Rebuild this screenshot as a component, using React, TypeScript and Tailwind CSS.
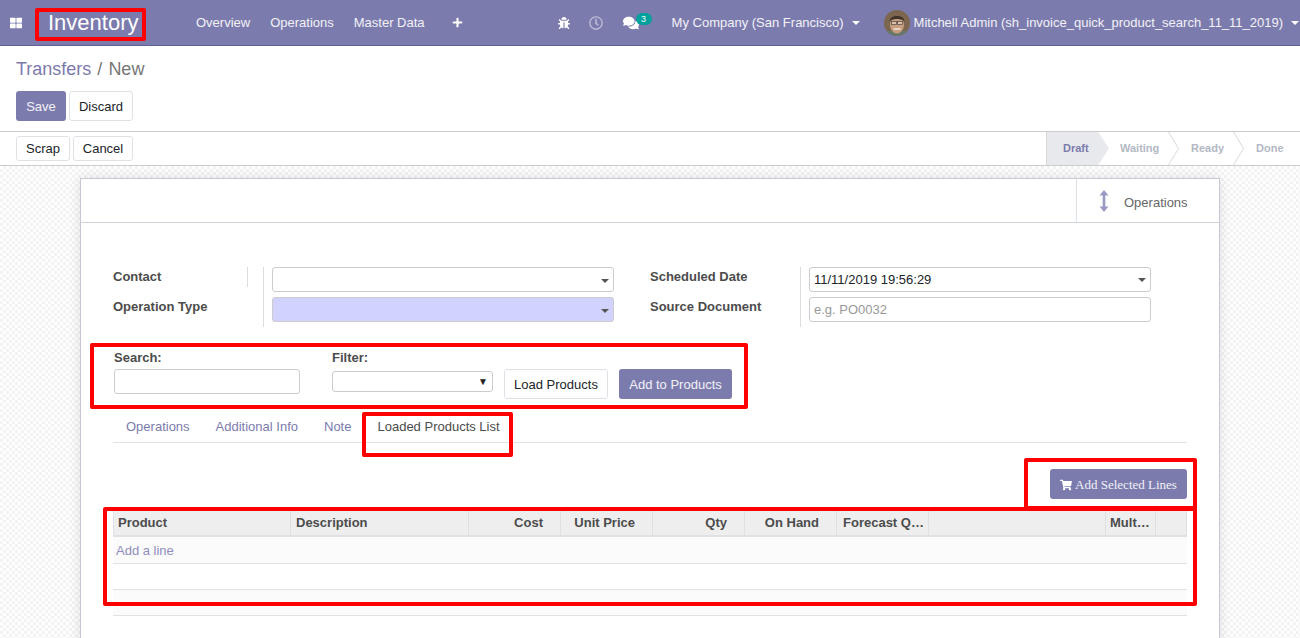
import { FaBug, FaComments, FaPlus, FaRegClock, FaShoppingCart, FaThLarge } from "react-icons/fa";

const COLS = [
  { label: "Product", w: "w-[177px]", cls: "text-left pl-[4px]" },
  { label: "Description", w: "w-[178px]", cls: "text-left pl-[5px]" },
  { label: "Cost", w: "w-[92px]", cls: "text-right pr-[17px]" },
  { label: "Unit Price", w: "w-[92px]", cls: "text-right pr-[17px]" },
  { label: "Qty", w: "w-[92px]", cls: "text-right pr-[17px]" },
  { label: "On Hand", w: "w-[92px]", cls: "text-right pr-[17px]" },
  { label: "Forecast Q…", w: "w-[92px]", cls: "text-left pl-[6px]" },
  { label: "", w: "w-[177px]", cls: "" },
  { label: "Mult…", w: "w-[50px]", cls: "text-left pl-[4px]" },
  { label: "", w: "flex-1", cls: "" },
];

function Caret() {
  return <span className="ml-[8px] inline-block border-x-[4px] border-t-[4px] border-x-transparent border-t-white align-middle" />;
}

function Chevron() {
  return (
    <svg width="11" height="33" viewBox="0 0 11 33" className="absolute right-[-10px] top-0 z-10">
      <path d="M0.5 0 L10.5 16.5 L0.5 33" fill="none" stroke="#d9d9d9" />
    </svg>
  );
}

function Many2One({ filled }: { filled?: boolean }) {
  return (
    <div className={`relative h-[25px] w-[342px] rounded-[3px] border border-[#ccc] ${filled ? "bg-[#d2d2ff]" : "bg-white"}`}>
      <span className="absolute right-[4px] top-[11px] border-x-[4px] border-t-[4px] border-x-transparent border-t-[#555]" />
    </div>
  );
}

function Avatar() {
  return (
    <svg width="26" height="26" viewBox="0 0 26 26" className="shrink-0">
      <clipPath id="av"><circle cx="13" cy="13" r="13" /></clipPath>
      <g clipPath="url(#av)">
        <rect width="26" height="26" fill="#7d6650" />
        <path d="M0 21h26v5H0z" fill="#68796c" />
        <ellipse cx="13" cy="14.5" rx="7" ry="9" fill="#c99f82" />
        <path d="M5.5 12C5.5 3.5 20.5 3.5 20.5 12 19 8 7 8 5.5 12z" fill="#3f332a" />
        <rect x="7.5" y="11.5" width="5" height="3" fill="#dcc0aa" stroke="#4b4743" strokeWidth="0.7" />
        <rect x="13.5" y="11.5" width="5" height="3" fill="#dcc0aa" stroke="#4b4743" strokeWidth="0.7" />
        <path d="M9.5 19h7" stroke="#f3e6da" strokeWidth="1.5" />
      </g>
    </svg>
  );
}

export default function App() {
  return (
    <div className="relative flex h-[638px] w-[1300px] flex-col overflow-hidden bg-white font-['Liberation_Sans',Arial,sans-serif] text-[13px] text-[#4c4c4c]">
      {/* navbar */}
      <div className="flex h-[46px] shrink-0 items-center border-b border-[#5f5e97] bg-[#7c7bad] text-white">
        <FaThLarge className="ml-[10px] text-[12px]" />
        <div className="relative ml-[26px] w-[138px] text-[22px] leading-none font-light">
          Inventory
          <span className="absolute left-[-13px] top-[-4px] h-[33px] w-[111px] rounded-[2px] border-4 border-[#ff0000]" />
        </div>
        <div className="ml-[10px] flex items-center gap-[20px] text-white/90">
          <span>Overview</span>
          <span>Operations</span>
          <span>Master Data</span>
          <FaPlus className="ml-[7px] text-[11px] text-white" />
        </div>
        <FaBug className="ml-[95px] text-[12px]" />
        <FaRegClock className="ml-[19px] text-[14px] text-white/50" />
        <div className="relative ml-[20px] w-[16px]">
          <FaComments className="text-[16px]" />
          <span className="absolute left-[13px] top-[-2px] h-[12px] w-[16px] rounded-full bg-[#00a09d] text-center text-[9px] leading-[12px]">3</span>
        </div>
        <span className="ml-[33px] text-white/90">My Company (San Francisco)</span>
        <Caret />
        <div className="ml-[24px]"><Avatar /></div>
        <span className="ml-[4px] text-white/90">Mitchell Admin (sh_invoice_quick_product_search_11_11_2019)</span>
        <Caret />
      </div>

      {/* control panel */}
      <div className="h-[86px] shrink-0 border-b border-[#ccc] pl-[16px]">
        <div className="mt-[12px] text-[18px] leading-[22px]">
          <span className="text-[#7c7bad]">Transfers</span>
          <span className="mx-[6px] text-[#777]">/</span>
          <span className="text-[#777]">New</span>
        </div>
        <div className="mt-[11px] flex gap-[3px]">
          <button className="h-[30px] w-[50px] rounded-[3px] bg-[#7c7bad] pt-[1px] text-white/90">Save</button>
          <button className="h-[30px] w-[64px] rounded-[3px] border border-[#dee2e6] pt-[1px] text-[#212529]">Discard</button>
        </div>
      </div>

      {/* status bar */}
      <div className="flex h-[34px] shrink-0 items-center justify-between border-b border-[#ccc] pl-[16px]">
        <div className="flex gap-[3px]">
          <button className="h-[25px] w-[54px] rounded-[3px] border border-[#dee2e6] text-[#212529]">Scrap</button>
          <button className="h-[25px] w-[60px] rounded-[3px] border border-[#dee2e6] text-[#212529]">Cancel</button>
        </div>
        <div className="flex h-full w-[254px] text-[11px] font-bold text-[#b3b8c4]">
          <div className="flex h-full w-[63px] items-center border-l border-[#d9d9d9] bg-[#e7e9ed] pl-[16px] text-[#7c7bad] [clip-path:polygon(0_0,83%_0,100%_50%,83%_100%,0_100%)]">Draft</div>
          <div className="relative flex w-[60px] items-center pl-[11px]">Waiting<Chevron /></div>
          <div className="relative flex w-[65px] items-center pl-[22px]">Ready<Chevron /></div>
          <div className="flex flex-1 items-center pl-[22px]">Done</div>
        </div>
      </div>

      {/* sheet background */}
      <div className="flex-1 bg-[image:repeating-conic-gradient(#f3f3f3_0_25%,#ffffff_0_50%)] bg-[length:6px_6px] pt-[12px]">
        <div className="mx-auto h-[500px] w-[1140px] border border-[#c8c8d4] bg-white shadow-[0_0_12px_rgba(0,0,0,0.12)]">
          <div className="flex h-[44px] justify-end border-b border-[#ced4da]">
            <div className="flex w-[143px] items-center border-l border-[#dee2e6] pl-[21px] pt-[5px] text-[#666]">
              <svg width="12" height="24" viewBox="0 0 12 24" className="mr-[14px] mt-[-5px]">
                <path d="M6 1 L10.5 6.5 H7.3 V17.5 H10.5 L6 23 L1.5 17.5 H4.7 V6.5 H1.5 Z" fill="#9a99c5" />
              </svg>
              Operations
            </div>
          </div>

          {/* main fields */}
          <div className="ml-[32px] mt-[44px] flex h-[60px]">
            <div className="flex w-[150px] flex-col font-bold">
              <div className="h-[20px] w-[135px] border-r border-[#ddd] leading-[20px]">Contact</div>
              <div className="mt-[10px] leading-[20px]">Operation Type</div>
            </div>
            <div className="flex w-[351px] flex-col gap-[5px] border-l border-[#ddd] pl-[8px]">
              <Many2One />
              <Many2One filled />
            </div>
            <div className="ml-[36px] flex w-[150px] flex-col font-bold">
              <div className="leading-[20px]">Scheduled Date</div>
              <div className="mt-[10px] leading-[20px]">Source Document</div>
            </div>
            <div className="flex flex-col gap-[5px] border-l border-[#ddd] pl-[8px]">
              <div className="relative h-[25px] w-[342px] rounded-[3px] border border-[#ccc] pl-[4px] leading-[23px] text-[#212529]">
                11/11/2019 19:56:29
                <span className="absolute right-[4px] top-[10px] border-x-[4px] border-t-[4px] border-x-transparent border-t-[#555]" />
              </div>
              <div className="h-[25px] w-[342px] rounded-[3px] border border-[#ccc] pl-[4px] leading-[23px] text-[#999]">e.g. PO0032</div>
            </div>
          </div>

          {/* quick search */}
          <div className="relative ml-[33px] mt-[22px] flex h-[52px] items-start font-bold">
            <span className="absolute left-[-24px] top-[-6px] h-[66px] w-[658px] rounded-[2px] border-4 border-[#ff0000]" />
            <div className="w-[218px]">
              <div className="h-[18px] leading-[18px]">Search:</div>
              <div className="mt-[2px] h-[25px] w-[186px] rounded-[3px] border border-[#ccc]" />
            </div>
            <div className="w-[172px]">
              <div className="h-[18px] leading-[18px]">Filter:</div>
              <div className="relative mt-[4px] h-[21px] w-[161px] rounded-[3px] border border-[#ccc]">
                <span className="absolute right-[4px] top-[2px] text-[10px] text-[#222]">▼</span>
              </div>
            </div>
            <button className="mt-[20px] h-[30px] w-[104px] rounded-[3px] border border-[#dee2e6] pt-[1px] font-normal text-[#212529]">Load Products</button>
            <button className="ml-[11px] mt-[20px] h-[30px] w-[113px] rounded-[3px] bg-[#7c7bad] pt-[1px] font-normal text-white/90">Add to Products</button>
          </div>

          {/* tabs */}
          <div className="ml-[32px] mt-[8px] flex h-[34px] w-[1074px] border-b border-[#dee2e6] pl-[13px] leading-[36px] text-[#7c7bad]">
            <span className="mr-[26px]">Operations</span>
            <span className="mr-[26px]">Additional Info</span>
            <span className="mr-[26px]">Note</span>
            <span className="relative text-[#4c4c4c]">
              Loaded Products List
              <span className="absolute left-[-15px] top-[3px] h-[45px] w-[151px] rounded-[2px] border-4 border-[#ff0000]" />
            </span>
          </div>

          {/* action */}
          <div className="relative ml-[32px] mt-[26px] flex h-[42px] w-[1074px] items-start justify-end">
            <span className="absolute right-[-10px] top-[-11px] h-[52px] w-[173px] rounded-[2px] border-4 border-[#ff0000]" />
            <button className="flex h-[30px] w-[137px] items-center justify-center gap-[3px] rounded-[3px] bg-[#7c7bad] pt-[1px] font-['Liberation_Serif',serif] text-white/90">
              <FaShoppingCart className="text-[12px] text-white" />
              Add Selected Lines
            </button>
          </div>

          {/* table */}
          <div className="relative ml-[32px] w-[1074px]">
            <span className="absolute left-[-10px] top-[-4px] h-[99px] w-[1094px] rounded-[2px] border-4 border-[#ff0000]" />
            <div className="flex h-[26px] border-b-2 border-l border-[#dee2e6] bg-[#eeeeee] font-bold">
              {COLS.map((c, i) => (
                <div key={i} className={`h-full border-r border-[#dfdfdf] leading-[23px] ${c.w} ${c.cls}`}>{c.label}</div>
              ))}
            </div>
            <div className="h-[27px] border-b border-[#dee2e6] bg-[#fbfbfb] pl-[3px] pt-[1px] leading-[26px] text-[#8f8ebd]">Add a line</div>
            <div className="h-[26px] border-b border-[#dee2e6] bg-white" />
            <div className="h-[26px] border-b border-[#dee2e6] bg-[#fbfbfb]" />
          </div>
        </div>
      </div>
    </div>
  );
}
